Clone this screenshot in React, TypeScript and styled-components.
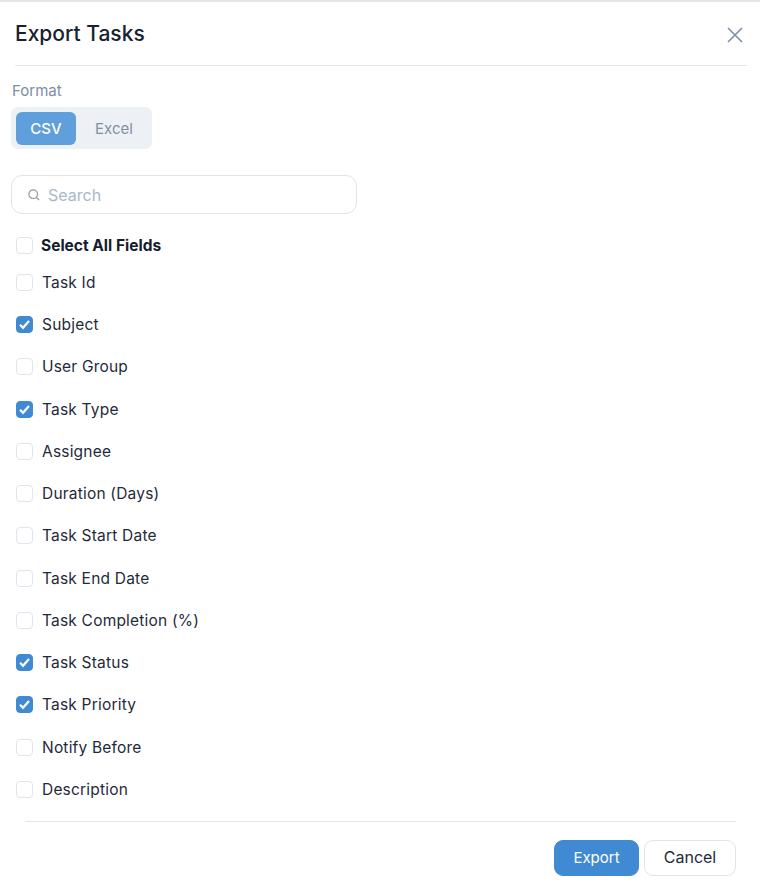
import React from "react";
import styled, { createGlobalStyle } from "styled-components";

const Global = createGlobalStyle`
  html, body { margin: 0; padding: 0; background: #fff; }
  body { font-family: Inter, "Noto Sans", "Liberation Sans", sans-serif; color: #1a2433; }
  * { box-sizing: border-box; }
`;

const Modal = styled.div`
  width: 760px;
  height: 885px;
  border-top: 2px solid #e4e5e7;
  background: #fff;
  display: flex;
  flex-direction: column;
  overflow: hidden;
`;

const Header = styled.header`
  height: 64px;
  margin: 0 13px 0 15px;
  border-bottom: 1px solid #e2e6ee;
  display: flex;
  align-items: flex-start;
  justify-content: space-between;
`;

const Title = styled.h2`
  margin: 18px 0 0;
  font-size: 21px;
  line-height: 28px;
  font-weight: 500;
  color: #17212f;
`;

const CloseButton = styled.button`
  margin: 24px 3px 0 0;
  padding: 0;
  width: 18px;
  height: 18px;
  background: none;
  border: 0;
  color: #7b8fa6;
  display: flex;
`;

const Body = styled.div`
  padding: 15px 0 0 11px;
  display: flex;
  flex-direction: column;
  flex: 1;
`;

const Label = styled.div`
  margin-left: 1px;
  font-size: 15px;
  line-height: 20px;
  color: #7d8ea3;
`;

const Toggle = styled.div`
  margin-top: 6px;
  width: 141px;
  height: 42px;
  padding: 5px;
  background: #edf0f5;
  border-radius: 7px;
  display: flex;
  align-items: flex-start;
`;

const ToggleOption = styled.div<{ $active?: boolean }>`
  width: ${(p) => (p.$active ? "60px" : "76px")};
  flex: none;
  height: 33px;
  border-radius: 6px;
  display: flex;
  align-items: center;
  justify-content: center;
  font-size: 15px;
  font-weight: ${(p) => (p.$active ? 500 : 400)};
  background: ${(p) => (p.$active ? "#5f9fdb" : "transparent")};
  color: ${(p) => (p.$active ? "#fff" : "#8391a3")};
`;

const SearchBox = styled.div`
  margin-top: 26px;
  width: 346px;
  height: 39px;
  padding-left: 16px;
  border: 1px solid #dfe4ee;
  border-radius: 11px;
  display: flex;
  align-items: center;
  gap: 8px;
  color: #8d99a8;
`;

const SearchText = styled.span`
  font-size: 16px;
  color: #a9b8cb;
`;

const Fields = styled.div`
  margin: 21px 0 0 5px;
  display: flex;
  flex-direction: column;
`;

const Row = styled.label<{ $all?: boolean }>`
  height: ${(p) => (p.$all ? "20px" : "42.25px")};
  margin-bottom: ${(p) => (p.$all ? "6.25px" : "0")};
  display: flex;
  align-items: center;
  gap: ${(p) => (p.$all ? "8px" : "9px")};
  font-size: 15.5px;
  letter-spacing: ${(p) => (p.$all ? "0" : "0.2px")};
  font-weight: ${(p) => (p.$all ? 700 : 400)};
  color: ${(p) => (p.$all ? "#141d2b" : "#1f2a3a")};
`;

const Box = styled.span<{ $on?: boolean }>`
  width: 17px;
  height: 17px;
  flex: none;
  border-radius: 4px;
  border: 1px solid ${(p) => (p.$on ? "#3f8ad2" : "#dfe4ee")};
  background: ${(p) => (p.$on ? "#3f8ad2" : "#fff")};
  display: flex;
  align-items: center;
  justify-content: center;
`;

const Footer = styled.footer`
  margin: 0 24px 9px 25px;
  padding-top: 18px;
  border-top: 1px solid #e2e6ee;
  display: flex;
  justify-content: flex-end;
  gap: 5px;
`;

const Button = styled.button<{ $primary?: boolean }>`
  height: 36px;
  width: ${(p) => (p.$primary ? "85px" : "92px")};
  padding: 0 0 2px;
  border-radius: 9px;
  font-family: inherit;
  font-size: ${(p) => (p.$primary ? "15px" : "16px")};
  border: 1px solid ${(p) => (p.$primary ? "#3f8ad2" : "#dfe4ee")};
  background: ${(p) => (p.$primary ? "#3f8ad2" : "#fff")};
  color: ${(p) => (p.$primary ? "#fff" : "#1f2a3a")};
`;

const fields: [string, boolean][] = [
  ["Task Id", false],
  ["Subject", true],
  ["User Group", false],
  ["Task Type", true],
  ["Assignee", false],
  ["Duration (Days)", false],
  ["Task Start Date", false],
  ["Task End Date", false],
  ["Task Completion (%)", false],
  ["Task Status", true],
  ["Task Priority", true],
  ["Notify Before", false],
  ["Description", false],
];

const Check = () => (
  <svg width="13" height="13" viewBox="0 0 13 13" fill="none">
    <path d="M2 6.8 5 9.8 11 3" stroke="#fff" strokeWidth="2.2" />
  </svg>
);

export default function App() {
  return (
    <>
      <Global />
      <Modal>
        <Header>
          <Title>Export Tasks</Title>
          <CloseButton aria-label="Close">
            <svg width="18" height="18" viewBox="0 0 18 18" fill="none">
              <path d="M2 2 16 16M16 2 2 16" stroke="currentColor" strokeWidth="1.6" />
            </svg>
          </CloseButton>
        </Header>
        <Body>
          <Label>Format</Label>
          <Toggle>
            <ToggleOption $active>CSV</ToggleOption>
            <ToggleOption>Excel</ToggleOption>
          </Toggle>
          <SearchBox>
            <svg width="12" height="12" viewBox="0 0 12 12" fill="none">
              <circle cx="5.2" cy="5.2" r="4.3" stroke="currentColor" strokeWidth="1.2" />
              <path d="M8.5 8.5 11.2 11.2" stroke="currentColor" strokeWidth="1.2" />
            </svg>
            <SearchText>Search</SearchText>
          </SearchBox>
          <Fields>
            <Row $all>
              <Box />
              Select All Fields
            </Row>
            {fields.map(([name, on]) => (
              <Row key={name}>
                <Box $on={on}>{on && <Check />}</Box>
                {name}
              </Row>
            ))}
          </Fields>
        </Body>
        <Footer>
          <Button $primary>Export</Button>
          <Button>Cancel</Button>
        </Footer>
      </Modal>
    </>
  );
}
